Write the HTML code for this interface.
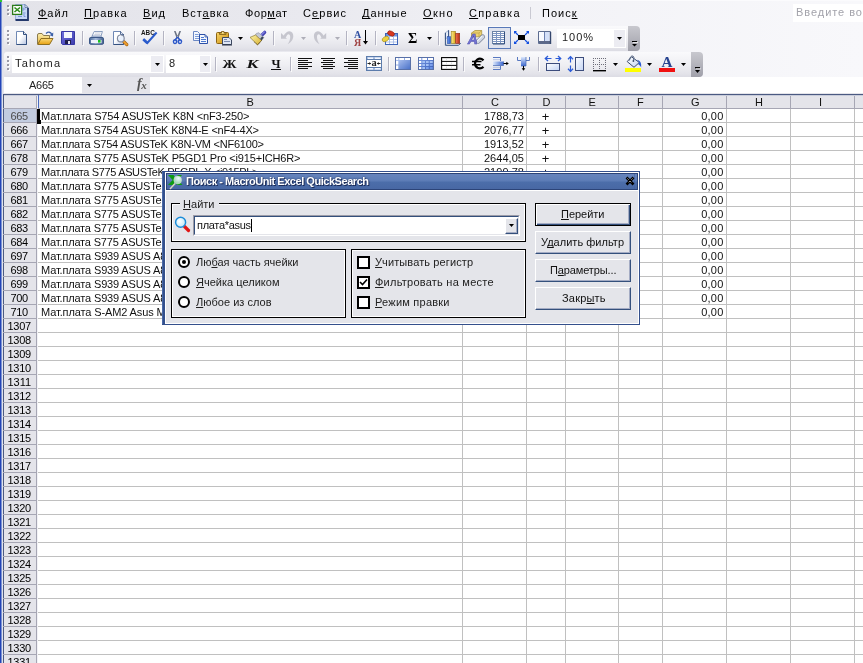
<!DOCTYPE html>
<html><head><meta charset="utf-8"><title>Excel</title>
<style>
*{box-sizing:border-box;margin:0;padding:0}
html,body{width:863px;height:663px;overflow:hidden;background:#fff}
body{font-family:"Liberation Sans",sans-serif;font-size:11px;color:#000;position:relative;will-change:transform}
.a{position:absolute}
.t{position:absolute;white-space:nowrap;line-height:14px;height:14px}
u{text-decoration:underline;text-decoration-skip-ink:none;text-underline-offset:1px;text-decoration-thickness:1px}
svg{position:absolute;overflow:visible}
.grip i{position:absolute;width:2px;height:2px;background:#fff;left:1px}
.grip i:before{content:"";position:absolute;left:-1px;top:-1px;width:2px;height:2px;background:#9a9aa6}
.sep{position:absolute;width:1px;background:#a9a9b8}
.dd{position:absolute;width:5px;height:3px;background:#000;clip-path:polygon(0 0,100% 0,50% 100%)}
</style></head><body>
<!-- window left border -->
<div class="a" style="left:0;top:0;width:1px;height:663px;background:#2444b8"></div>
<div class="a" style="left:1px;top:0;width:1px;height:663px;background:#7c94d4"></div>
<div class="a" style="left:2px;top:0;width:1px;height:663px;background:#e0e2ec"></div>
<div class="a" style="left:0;top:0;width:2px;height:2px;background:#30c830"></div><!-- green -->
<!-- menu bar -->
<div class="a" style="left:3px;top:0;width:860px;height:26px;background:linear-gradient(90deg,#e3e3e9 0%,#e9e9ef 35%,#f3f3f7 65%,#f8f8fb 100%)"></div>
<div class="a" style="left:3px;top:0;width:860px;height:1px;background:#fbfbfd"></div>
<div class="a" style="left:793px;top:4px;width:70px;height:18px;background:#fff"></div>
<div class="sep" style="left:530px;top:7px;height:12px;background:#c9c9d2"></div>
<div class="grip a" style="left:7px;top:0"><i style="top:6px"></i><i style="top:10px"></i><i style="top:14px"></i></div>
<svg style="left:0;top:0" width="60" height="26" viewBox="0 0 60 26">
<path d="M15.500 4.500 H25 L28 7.500 V19.500 H15.500 Z" fill="#c8d8f8" stroke="#8ca4d8" stroke-width="0.800"/>
<path d="M25 4.500 L28 7.500 H25 Z" fill="#f4f8ff" stroke="#34507c" stroke-width="0.600"/>
<path d="M23 7.500 V11 M23 9 H25.500 M23 13 H25.500 M18 16.500 H22 M24 14 V16.500 H25.500" stroke="#7c98d8" stroke-width="1" fill="none"/>
<path d="M28 8 V20 H15.500" fill="none" stroke="#24386c" stroke-width="1.800"/>
<rect x="12.600" y="5.400" width="9" height="9" fill="#fff" stroke="#2c7c1c" stroke-width="1.300"/>
<path d="M14.500 7.500 L20 12 M20 7.500 L14.500 12" stroke="#2c8c1c" stroke-width="1.600"/>
</svg>

<!-- toolbar rows background -->
<div class="a" style="left:3px;top:26px;width:860px;height:51px;background:linear-gradient(90deg,#e3e3e9 0%,#e9e9ef 35%,#f3f3f7 65%,#f8f8fb 100%)"></div>
<!-- standard toolbar -->
<div class="a" style="left:4px;top:26px;width:636px;height:25px;border-radius:3px 4px 4px 3px;background:linear-gradient(180deg,#fafafc 0%,#efeff3 50%,#e4e4ea 85%,#dcdce4 100%)"></div>
<div class="a" style="left:628px;top:26px;width:12px;height:25px;border-radius:0 4px 4px 0;background:linear-gradient(180deg,#c8c8ce 0%,#b4b4bc 50%,#a0a0aa 100%)"></div>
<div class="grip a" style="left:7px;top:26px"><i style="top:5px"></i><i style="top:9px"></i><i style="top:13px"></i><i style="top:17px"></i></div>
<svg style="left:0;top:0" width="863" height="80" viewBox="0 0 863 80">
<defs>
<linearGradient id="gPage" x1="0" y1="0" x2="1" y2="1"><stop offset="0" stop-color="#fff"/><stop offset="0.45" stop-color="#fff"/><stop offset="1" stop-color="#b4c2e0"/></linearGradient>
<linearGradient id="gFold" x1="0" y1="0" x2="0" y2="1"><stop offset="0" stop-color="#fbeeb0"/><stop offset="1" stop-color="#e9b63a"/></linearGradient>
<linearGradient id="gFold2" x1="0" y1="0" x2="0" y2="1"><stop offset="0" stop-color="#f9d978"/><stop offset="1" stop-color="#e8a010"/></linearGradient>
<linearGradient id="gSave" x1="0" y1="0" x2="1" y2="1"><stop offset="0" stop-color="#7070e0"/><stop offset="1" stop-color="#3c3cac"/></linearGradient>
<linearGradient id="gPrn" x1="0" y1="0" x2="0" y2="1"><stop offset="0" stop-color="#9fb4d4"/><stop offset="1" stop-color="#4c6a98"/></linearGradient>
<linearGradient id="gBlue" x1="0" y1="0" x2="1" y2="1"><stop offset="0" stop-color="#a8c0f0"/><stop offset="1" stop-color="#3a5cb0"/></linearGradient>
<linearGradient id="gClip" x1="0" y1="0" x2="1" y2="1"><stop offset="0" stop-color="#f8d468"/><stop offset="1" stop-color="#cc9010"/></linearGradient>
<linearGradient id="gPrn2" x1="0" y1="0" x2="1" y2="0"><stop offset="0" stop-color="#4c6c9c"/><stop offset="0.45" stop-color="#a8bcdc"/><stop offset="1" stop-color="#44608c"/></linearGradient>
<linearGradient id="gBristle" x1="0" y1="0" x2="1" y2="1"><stop offset="0" stop-color="#fcf4a8"/><stop offset="1" stop-color="#d8b030"/></linearGradient>
<linearGradient id="gBarB" x1="0" y1="0" x2="1" y2="0"><stop offset="0" stop-color="#6c9cf0"/><stop offset="1" stop-color="#2c58c0"/></linearGradient>
<linearGradient id="gBarY" x1="0" y1="0" x2="1" y2="0"><stop offset="0" stop-color="#fcec90"/><stop offset="1" stop-color="#d8a818"/></linearGradient>
<linearGradient id="gBarR" x1="0" y1="0" x2="1" y2="0"><stop offset="0" stop-color="#f07050"/><stop offset="1" stop-color="#b42c14"/></linearGradient>
</defs>
<!-- separators -->
<g fill="#b4b4c2">
<rect x="82" y="31" width="1" height="14"/><rect x="134" y="31" width="1" height="14"/><rect x="163" y="31" width="1" height="14"/>
<rect x="273" y="31" width="1" height="14"/><rect x="346" y="31" width="1" height="14"/><rect x="375" y="31" width="1" height="14"/><rect x="438" y="31" width="1" height="14"/>
</g>
<g fill="#fff" opacity="0.8">
<rect x="83" y="32" width="1" height="14"/><rect x="135" y="32" width="1" height="14"/><rect x="164" y="32" width="1" height="14"/>
<rect x="274" y="32" width="1" height="14"/><rect x="347" y="32" width="1" height="14"/><rect x="376" y="32" width="1" height="14"/><rect x="439" y="32" width="1" height="14"/>
</g>
<!-- new -->
<path d="M16.5 31.5 H23.5 L26.5 34.5 V44.5 H16.5 Z" fill="url(#gPage)" stroke="#6f88b4" stroke-width="1"/>
<path d="M23.5 31.5 L26.5 34.5 V44.5 H16.5" fill="none" stroke="#34507f" stroke-width="1"/>
<path d="M23.5 31.5 V34.5 H26.5" fill="#dfe6f5" stroke="#34507f" stroke-width="1"/>
<!-- open -->
<path d="M37.5 44 V35 Q37.5 33.5 39 33.5 H42 L43.5 35.5 H49.5 V38.5" fill="url(#gFold)" stroke="#8a7a4c" stroke-width="1"/>
<path d="M37.7 44.5 L41 38.5 H53 L49.5 44.5 Z" fill="url(#gFold2)" stroke="#8f6f20" stroke-width="1"/>
<path d="M46 33.5 Q49.5 30.5 52 34.5" fill="none" stroke="#3a5fa8" stroke-width="1.3"/>
<path d="M53.3 32.5 L53 36.5 L49.7 35.3 Z" fill="#3a5fa8"/>
<!-- save -->
<path d="M61.5 31.5 H74.5 V44.5 H62.5 L61.5 43.5 Z" fill="url(#gSave)" stroke="#3838a4" stroke-width="1"/>
<rect x="64" y="32" width="8" height="6" fill="#f4f6fc"/>
<rect x="65" y="40" width="6" height="4" fill="#20204c"/>
<rect x="68" y="41" width="2" height="3" fill="#e8e8f4"/>
<!-- print -->
<path d="M92 36.200 L94.200 31.500 H102.400 L101 36.200 Z" fill="#fff" stroke="#7088b0" stroke-width="0.800"/>
<path d="M95 33 H100.800 M94.300 34.600 H100.300" stroke="#b4bcd0" stroke-width="0.700"/>
<path d="M90.500 38 L92 36.200 H101 L103 38 Z" fill="#d4dcec" stroke="#6c84ac" stroke-width="0.600"/>
<rect x="89.500" y="37.500" width="14" height="6.800" rx="1.200" fill="url(#gPrn2)" stroke="#3c5888" stroke-width="1"/>
<rect x="91" y="40" width="10.500" height="3" fill="#eef2fa"/>
<rect x="98" y="40" width="2.600" height="2.600" fill="#18c020"/>
<!-- preview -->
<path d="M113.500 31.500 H120.500 L123.500 34.500 V44.500 H113.500 Z" fill="url(#gPage)" stroke="#6f88b4" stroke-width="1"/>
<path d="M120.500 31.500 L123.500 34.500 V44.500 H113.500" fill="none" stroke="#34507f" stroke-width="1"/>
<path d="M120.500 31.500 V34.500 H123.500" fill="#dfe6f5" stroke="#34507f" stroke-width="0.800"/>
<path d="M123.800 41.600 L126.800 44.600" stroke="#a86410" stroke-width="3.200" stroke-linecap="round"/>
<path d="M123.800 41.600 L126.800 44.600" stroke="#f0a030" stroke-width="1.800" stroke-linecap="round"/>
<circle cx="120.800" cy="38.400" r="3.400" fill="#e8f0fc" stroke="#848ca0" stroke-width="1.200"/>
<path d="M118.800 37.500 Q119.500 36 121 35.800" stroke="#fff" stroke-width="0.900" fill="none"/>
<!-- spell -->
<text x="141" y="34.600" font-family="Liberation Sans" font-weight="bold" font-size="6.500" fill="#181818" textLength="13.800" lengthAdjust="spacingAndGlyphs">ABC</text>
<path d="M143.300 39.300 L147.300 43 L156.600 32.500" fill="none" stroke="#2c5ccc" stroke-width="2"/>
<path d="M143.300 39.300 L147.300 43" fill="none" stroke="#2c5ccc" stroke-width="2.600"/>
<!-- cut -->
<path d="M174 31 L175.600 31 L178.300 37.800 L176.700 38.600 Z M181 31 L179.400 31 L176.700 37.800 L178.300 38.600 Z" fill="#6c7484"/>
<path d="M177.500 37 L175 40 M177.500 37 L180 40" stroke="#2c54c0" stroke-width="1.400"/>
<ellipse cx="175.100" cy="41.600" rx="2.300" ry="2.600" fill="#2c58c8"/>
<ellipse cx="179.900" cy="41.600" rx="2.300" ry="2.600" fill="#2c58c8"/>
<ellipse cx="175" cy="41.800" rx="0.900" ry="1.100" fill="#dfe6f8"/>
<ellipse cx="180" cy="41.800" rx="0.900" ry="1.100" fill="#dfe6f8"/>
<!-- copy -->
<path d="M193.500 31.500 H197.500 L199.500 33.500 V40.500 H193.500 Z" fill="#f4f7fd" stroke="#6c88c4" stroke-width="1"/>
<path d="M195 34.500 H198.500 M195 36.500 H199 M195 38.500 H199" stroke="#7c9cd8" stroke-width="1"/>
<path d="M199.500 34.500 H205 L207.500 37 V43.500 H199.500 Z" fill="#f4f7fd" stroke="#2c50a8" stroke-width="1"/>
<path d="M205 34.500 V37 H207.500" fill="none" stroke="#2c50a8" stroke-width="0.800"/>
<path d="M201 37.500 H204 M201 39.500 H206 M201 41.500 H206" stroke="#4c78d0" stroke-width="1"/>
<!-- paste -->
<rect x="216.500" y="32.500" width="12" height="11" rx="1" fill="url(#gClip)" stroke="#8c6414" stroke-width="1"/>
<path d="M219.500 34.500 V33 H221.500 V31.500 H224 V33 H226 V34.500 Z" fill="#e8c048" stroke="#7c5c18" stroke-width="0.800"/>
<rect x="222.200" y="32.200" width="1.200" height="1.200" fill="#fff8d8"/>
<path d="M222.500 37.500 H229 L231.500 40 V44.500 H222.500 Z" fill="#dfe6f4" stroke="#3c4860" stroke-width="1"/>
<path d="M222 45 H232" stroke="#2c3448" stroke-width="1"/>
<path d="M224 39.500 H227 M224 41.500 H230" stroke="#7c8cb0" stroke-width="1"/>
<path d="M238 37 H243 L240.500 40 Z" fill="#000"/>
<!-- format painter -->
<path d="M261.500 35.500 L264.700 32.300" stroke="#4444b4" stroke-width="3.200" stroke-linecap="round"/>
<path d="M261.300 34.800 L264.300 32" stroke="#8080e0" stroke-width="1.200" stroke-linecap="round"/>
<path d="M256.500 33.300 L259 32.800 L263.800 37.600 L261.500 40.500 L255.500 35 Z" fill="#c4c8d4" stroke="#8c90a4" stroke-width="0.600"/>
<path d="M262 36.500 L263.800 37.600 L261.500 40.500 L260 39 Z" fill="#3c4858"/>
<path d="M250 37.400 L255.500 35 L261.500 40.500 L257.600 44.900 Z" fill="url(#gBristle)" stroke="#8c7830" stroke-width="0.700"/>
<path d="M261.500 40.500 L257.600 44.900 L254 41.800" fill="none" stroke="#4c3c10" stroke-width="0.900" stroke-dasharray="1 0.800"/>
<!-- undo (disabled) -->
<g fill="#c6c6ce">
<path d="M281 33 V38.700 H287 Z"/>
<path d="M283.300 36.200 C285 33 287.500 31.300 289.500 31.300 C292 31.300 293.300 33.500 293.300 36 C293.300 39.500 291 42.600 287.600 44.200 C289.700 41.600 290.200 39 290.200 37 C290.200 35.200 289.500 34.300 288.500 34.300 C287.500 34.300 286.500 35.600 285.900 37.700 Z"/>
<path d="M326.200 33 V38.700 H320.200 Z"/>
<path d="M323.900 36.200 C322.200 33 319.700 31.300 317.700 31.300 C315.200 31.300 313.900 33.500 313.900 36 C313.900 39.500 316.200 42.600 319.600 44.200 C317.500 41.600 317 39 317 37 C317 35.200 317.700 34.300 318.700 34.300 C319.700 34.300 320.700 35.600 321.300 37.700 Z"/>
</g>
<path d="M301 37 H306 L303.500 40 Z" fill="#aeaeb8"/>
<path d="M335 37 H340 L337.500 40 Z" fill="#aeaeb8"/>
<!-- sort -->
<text x="354" y="37.600" font-family="Liberation Serif" font-weight="bold" font-size="10" fill="#2c4ca0" textLength="7.200" lengthAdjust="spacingAndGlyphs">A</text>
<text x="354" y="45.700" font-family="Liberation Serif" font-weight="bold" font-size="10.500" fill="#a04444" textLength="7.200" lengthAdjust="spacingAndGlyphs">Я</text>
<path d="M365.500 30 V43" stroke="#000" stroke-width="1"/>
<path d="M363 41 H368 L365.500 44.500 Z" fill="#000"/>
<!-- hyperlink/table icon -->
<rect x="385.500" y="33.500" width="12" height="11" fill="#fff" stroke="#3c64b8" stroke-width="1"/>
<rect x="386" y="34" width="11" height="2.500" fill="#6c94e0"/>
<path d="M386 39.500 H397 M386 42 H397 M389.500 36 V44 M393.500 36 V44" stroke="#9cb4e4" stroke-width="0.800"/>
<ellipse cx="391" cy="33.500" rx="3.600" ry="2.300" transform="rotate(25 391 33.500)" fill="#d83820" stroke="#982010" stroke-width="0.600"/>
<ellipse cx="385.500" cy="39" rx="3.600" ry="2.300" transform="rotate(-30 385.500 39)" fill="#ecd040" stroke="#a08818" stroke-width="0.600"/>
<!-- sigma -->
<text x="408" y="42.600" font-family="Liberation Serif" font-weight="bold" font-size="14.600" fill="#000" textLength="9.300" lengthAdjust="spacingAndGlyphs">Σ</text>
<path d="M427 37 H432 L429.500 40 Z" fill="#000"/>
<!-- chart -->
<path d="M445.400 32.800 L448.600 30.400 V36.500 L445.400 39 Z" fill="#e4ecf8" stroke="#6c84ac" stroke-width="0.600"/>
<path d="M448.600 30.300 V37" stroke="#34507f" stroke-width="1"/>
<path d="M445.400 32.800 V45.300 H458.500 L460.800 43" fill="none" stroke="#34507f" stroke-width="1"/>
<path d="M445.400 45.300 L447.500 43.500 H460.500" fill="none" stroke="#8ca0c4" stroke-width="0.600"/>
<rect x="447.200" y="36.700" width="3.400" height="6.800" fill="url(#gBarB)" stroke="#2448a0" stroke-width="0.500"/>
<rect x="451.200" y="31.300" width="4.300" height="12.200" fill="url(#gBarY)" stroke="#98801c" stroke-width="0.600"/>
<rect x="455.700" y="33.300" width="4" height="10.200" fill="url(#gBarR)" stroke="#8c2c14" stroke-width="0.600"/>
<!-- drawing -->
<path d="M471.500 33 L475 30.500 H481.700 V34.500 L479 36.800 H471.500 Z" fill="#ecd070" stroke="#a48c34" stroke-width="0.700"/>
<path d="M471.500 33 H479 V36.800 M479 33 L481.700 30.500" fill="none" stroke="#b89c40" stroke-width="0.600"/>
<path d="M478 41.500 L482.800 36.800" stroke="#7c8498" stroke-width="4.600" stroke-linecap="round"/>
<path d="M478 41.500 L482.800 36.800" stroke="#d0d6e2" stroke-width="3.200" stroke-linecap="round"/>
<path d="M477.600 40.600 L481.800 36.400" stroke="#f4f6fa" stroke-width="1.100" stroke-linecap="round"/>
<text x="467.700" y="43.500" font-family="Liberation Sans" font-weight="bold" font-style="italic" font-size="14" fill="#7474d4" stroke="#4c4cac" stroke-width="0.500" textLength="10" lengthAdjust="spacingAndGlyphs">A</text>
<!-- selected grid button -->
<rect x="488.500" y="27.500" width="22" height="21" fill="#dfe3ee" stroke="#5878b8" stroke-width="1"/>
<rect x="492.500" y="31.500" width="12" height="12" fill="#fff" stroke="#6c84a8" stroke-width="1"/>
<path d="M493 33.500 H504 M493 35.500 H504 M493 37.500 H504 M493 39.500 H504 M493 41.500 H504 M496.500 32 V43 M500.500 32 V43" stroke="#7c94c0" stroke-width="1"/>
<path d="M504.500 32 V44 H493" stroke="#34507f" stroke-width="1" fill="none"/>
<!-- fullscreen -->
<rect x="518" y="35" width="7" height="5" fill="#000"/>
<path d="M514.500 31.500 L518 35 M528.500 31.500 L525 35 M514.500 43.500 L518 40 M528.500 43.500 L525 40" stroke="#1450e0" stroke-width="1.200"/>
<path d="M514 31 H517 L514 34 Z M529 31 H526 L529 34 Z M514 44 H517 L514 41 Z M529 44 H526 L529 41 Z" fill="#1450e0"/>
<!-- panes -->
<path d="M538.500 31.500 H550.500 V43.500 H538.500 Z" fill="#e6ecfa" stroke="#5c6c90" stroke-width="1"/>
<rect x="539" y="32" width="5" height="9" fill="#f8faff"/><rect x="545" y="32" width="4" height="9" fill="#d4e0f8"/>
<path d="M544.500 32 V41" stroke="#6c80b0" stroke-width="1"/>
<rect x="539" y="41" width="11" height="2.500" fill="#5c6888"/>
<path d="M550.500 32 V44" stroke="#34466c" stroke-width="1.400"/>
<!-- zoom box -->
<rect x="557" y="29" width="69" height="19" fill="#fff"/>
<rect x="614" y="30" width="11" height="17" fill="#ececf2"/>
<path d="M617 37 H622 L619.500 40 Z" fill="#000"/>
<!-- end cap glyph -->
<rect x="632" y="41" width="5" height="1" fill="#000"/><path d="M632 44 H637 L634.500 46.500 Z" fill="#000"/>
<rect x="633" y="42" width="5" height="1" fill="#fff" opacity="0.7"/>
</svg>

<!-- formatting toolbar -->
<div class="a" style="left:4px;top:52px;width:699px;height:25px;border-radius:3px 4px 4px 3px;background:linear-gradient(180deg,#fafafc 0%,#efeff3 50%,#e4e4ea 85%,#dcdce4 100%)"></div>
<div class="a" style="left:691px;top:52px;width:12px;height:25px;border-radius:0 4px 4px 0;background:linear-gradient(180deg,#c8c8ce 0%,#b4b4bc 50%,#a0a0aa 100%)"></div>
<div class="grip a" style="left:7px;top:52px"><i style="top:5px"></i><i style="top:9px"></i><i style="top:13px"></i><i style="top:17px"></i></div>
<svg style="left:0;top:0" width="863" height="80" viewBox="0 0 863 80">
<defs>
<linearGradient id="gTbl" x1="0" y1="0" x2="1" y2="1"><stop offset="0" stop-color="#c0d2f8"/><stop offset="1" stop-color="#4870c8"/></linearGradient>
<linearGradient id="gBar" x1="0" y1="0" x2="1" y2="0"><stop offset="0" stop-color="#dce8fc"/><stop offset="1" stop-color="#3c68d0"/></linearGradient>
<linearGradient id="gBarV" x1="0" y1="0" x2="0" y2="1"><stop offset="0" stop-color="#dce8fc"/><stop offset="1" stop-color="#3c68d0"/></linearGradient>
<linearGradient id="gBox" x1="0" y1="0" x2="1" y2="1"><stop offset="0" stop-color="#fff"/><stop offset="1" stop-color="#c4d4f4"/></linearGradient>
<linearGradient id="gTbl2" x1="0" y1="0" x2="1" y2="1"><stop offset="0" stop-color="#7c9ce4"/><stop offset="1" stop-color="#3c60bc"/></linearGradient>
</defs>
<!-- font name box -->
<rect x="12" y="55" width="152" height="18" fill="#fff"/>
<rect x="151" y="56" width="12" height="16" fill="#ececf2"/>
<path d="M155 63 H160 L157.500 66 Z" fill="#000"/>
<!-- size box -->
<rect x="166" y="55" width="45" height="18" fill="#fff"/>
<rect x="200" y="56" width="10" height="16" fill="#ececf2"/>
<path d="M203 63 H208 L205.500 66 Z" fill="#000"/>
<!-- separators -->
<g fill="#b4b4c2">
<rect x="215" y="57" width="1" height="14"/><rect x="290" y="57" width="1" height="14"/><rect x="388" y="57" width="1" height="14"/>
<rect x="463" y="57" width="1" height="14"/><rect x="538" y="57" width="1" height="14"/>
</g>
<g fill="#fff" opacity="0.800">
<rect x="216" y="58" width="1" height="14"/><rect x="291" y="58" width="1" height="14"/><rect x="389" y="58" width="1" height="14"/>
<rect x="464" y="58" width="1" height="14"/><rect x="539" y="58" width="1" height="14"/>
</g>
<!-- B I U -->
<text x="222.500" y="68" font-family="Liberation Serif" font-weight="bold" font-size="13" fill="#111" textLength="14" lengthAdjust="spacingAndGlyphs">Ж</text>
<text x="246.500" y="68" font-family="Liberation Serif" font-weight="bold" font-style="italic" font-size="13" fill="#111" textLength="12" lengthAdjust="spacingAndGlyphs">К</text>
<text x="271.500" y="68" font-family="Liberation Serif" font-weight="bold" font-size="13" fill="#111" textLength="9" lengthAdjust="spacingAndGlyphs">Ч</text>
<rect x="271" y="69" width="10" height="1" fill="#111"/>
<!-- align -->
<g fill="#111" shape-rendering="crispEdges">
<rect x="298" y="58" width="14" height="1"/><rect x="298" y="60" width="10" height="1"/><rect x="298" y="62" width="14" height="1"/><rect x="298" y="64" width="10" height="1"/><rect x="298" y="66" width="14" height="1"/><rect x="298" y="68" width="10" height="1"/>
<rect x="321" y="58" width="14" height="1"/><rect x="323" y="60" width="10" height="1"/><rect x="321" y="62" width="14" height="1"/><rect x="323" y="64" width="10" height="1"/><rect x="321" y="66" width="14" height="1"/><rect x="323" y="68" width="10" height="1"/>
<rect x="344" y="58" width="14" height="1"/><rect x="348" y="60" width="10" height="1"/><rect x="344" y="62" width="14" height="1"/><rect x="348" y="64" width="10" height="1"/><rect x="344" y="66" width="14" height="1"/><rect x="348" y="68" width="10" height="1"/>
</g>
<!-- merge & center -->
<rect x="366.500" y="56.500" width="15" height="14" fill="#a8bce0" stroke="#5c7cac" stroke-width="1"/>
<g fill="#f4f8ff"><rect x="368" y="57.500" width="5" height="1.500"/><rect x="375" y="57.500" width="5.500" height="1.500"/><rect x="368" y="68" width="5" height="1.500"/><rect x="375" y="68" width="5.500" height="1.500"/></g>
<rect x="367" y="60" width="14" height="7" fill="#fff"/>
<path d="M367 59.500 H381 M367 67.500 H381" stroke="#5c7cac" stroke-width="1"/>
<text x="371.400" y="66.300" font-family="Liberation Serif" font-weight="bold" font-size="10.500" fill="#222" textLength="5.200" lengthAdjust="spacingAndGlyphs">a</text>
<path d="M367.500 63.500 H370.800 M377.200 63.500 H380.500" stroke="#222" stroke-width="1"/>
<path d="M369.300 62 L370.900 63.500 L369.300 65 Z M378.700 62 L377.100 63.500 L378.700 65 Z" fill="#222"/>
<!-- table icon 1 -->
<rect x="395.500" y="57.500" width="15" height="12" fill="url(#gTbl)" stroke="#5870a8" stroke-width="1"/>
<g fill="#fff"><rect x="396" y="58" width="2.300" height="2"/><rect x="399.300" y="58" width="4.700" height="2"/><rect x="405" y="58" width="5" height="2"/><rect x="396" y="61" width="2.300" height="3.500"/><rect x="396" y="65.500" width="2.300" height="3.500"/></g>
<!-- table icon 2 -->
<rect x="418.500" y="57.500" width="15" height="12" fill="#4468c0" stroke="#5870a8" stroke-width="1"/>
<rect x="419" y="58" width="14" height="11" fill="url(#gTbl2)"/>
<g fill="#fff"><rect x="419" y="58" width="2.300" height="2"/><rect x="422.300" y="58" width="4.700" height="2"/><rect x="428" y="58" width="5" height="2"/><rect x="419" y="61" width="2.300" height="2"/><rect x="419" y="64" width="2.300" height="2"/><rect x="419" y="67" width="2.300" height="2"/></g>
<g fill="#a4c0f4"><rect x="422.300" y="61" width="2.700" height="2"/><rect x="426" y="61" width="2.700" height="2"/><rect x="429.700" y="61" width="3" height="2"/><rect x="422.300" y="64" width="2.700" height="2"/><rect x="426" y="64" width="2.700" height="2"/><rect x="429.700" y="64" width="3" height="2" fill="#7ca0ec"/><rect x="422.300" y="67" width="2.700" height="2"/><rect x="426" y="67" width="2.700" height="2" fill="#7ca0ec"/><rect x="429.700" y="67" width="3" height="2" fill="#6890e4"/></g>
<!-- table icon 3 -->
<rect x="441.600" y="57.600" width="15.200" height="11.800" fill="#fff" stroke="#000" stroke-width="1.100"/>
<path d="M442 61.400 H456.500 M442 65.400 H456.500" stroke="#000" stroke-width="1"/>
<path d="M446.500 58.500 V69 M451.500 58.500 V69" stroke="#d8d8e0" stroke-width="0.800" stroke-dasharray="1.500 2.500"/>
<!-- euro -->
<path d="M483.500 60.300 Q480.500 57.600 477.500 59.400 Q475 61 475 63.500 Q475 66.200 477.500 67.700 Q480.500 69.300 483.500 66.800" fill="none" stroke="#000" stroke-width="2.300"/>
<path d="M472 61.600 H481.500 M472 64.800 H480.500" stroke="#000" stroke-width="1.500"/>
<!-- merge right -->
<path d="M493 57.500 H500.500 V61 M493 69.500 H500.500 V66" fill="none" stroke="#5878c0" stroke-width="1"/>
<path d="M493 59.700 H500 M493 67.300 H500" stroke="#a4b8e0" stroke-width="0.800"/>
<rect x="493" y="61.500" width="10.500" height="4" fill="url(#gBar)"/>
<path d="M493 65.500 H503.500 V61.500" fill="none" stroke="#4464b0" stroke-width="0.700"/>
<path d="M503.500 63.500 H508" stroke="#000" stroke-width="1"/><path d="M506.300 61.800 L508.800 63.500 L506.300 65.200 Z" fill="#000"/>
<!-- merge down -->
<path d="M517.500 57 V60.500 H521 M529.500 57 V60.500 H526" fill="none" stroke="#5878c0" stroke-width="1"/>
<rect x="521" y="57" width="5" height="9" fill="url(#gBarV)"/>
<path d="M521 66 H526 V57" fill="none" stroke="#4464b0" stroke-width="0.700"/>
<path d="M523.500 66 V70" stroke="#000" stroke-width="1"/><path d="M521.700 68.300 L523.500 70.800 L525.300 68.300 Z" fill="#000"/>
<!-- col width -->
<rect x="546.500" y="63.500" width="13" height="7" fill="url(#gBox)" stroke="#3c4c7c" stroke-width="1"/>
<path d="M545.500 58.500 H551.500 M555.500 58.500 H560.500" stroke="#2c5cd8" stroke-width="1.200"/>
<path d="M548 56 L545.300 58.500 L548 61 M558 56 L560.700 58.500 L558 61" fill="none" stroke="#2c5cd8" stroke-width="1.300"/>
<!-- row height -->
<rect x="575.500" y="57.500" width="8" height="13" fill="url(#gBox)" stroke="#3c4c7c" stroke-width="1"/>
<path d="M570.500 56.800 V62.500 M570.500 65.500 V71.200" stroke="#2c5cd8" stroke-width="1.200"/>
<path d="M568 59.300 L570.500 56.600 L573 59.300 M568 68.700 L570.500 71.400 L573 68.700" fill="none" stroke="#2c5cd8" stroke-width="1.300"/>
<!-- borders -->
<g fill="#6c6c78" shape-rendering="crispEdges">
<rect x="593" y="58" width="1" height="1"/><rect x="593" y="60" width="1" height="1"/><rect x="593" y="62" width="1" height="1"/><rect x="593" y="64" width="1" height="1"/><rect x="593" y="66" width="1" height="1"/><rect x="593" y="68" width="1" height="1"/><rect x="595" y="58" width="1" height="1"/><rect x="595" y="64" width="1" height="1"/><rect x="597" y="58" width="1" height="1"/><rect x="597" y="64" width="1" height="1"/><rect x="599" y="58" width="1" height="1"/><rect x="599" y="60" width="1" height="1"/><rect x="599" y="62" width="1" height="1"/><rect x="599" y="64" width="1" height="1"/><rect x="599" y="66" width="1" height="1"/><rect x="599" y="68" width="1" height="1"/><rect x="601" y="58" width="1" height="1"/><rect x="601" y="64" width="1" height="1"/><rect x="603" y="58" width="1" height="1"/><rect x="603" y="64" width="1" height="1"/><rect x="605" y="58" width="1" height="1"/><rect x="605" y="60" width="1" height="1"/><rect x="605" y="62" width="1" height="1"/><rect x="605" y="64" width="1" height="1"/><rect x="605" y="66" width="1" height="1"/><rect x="605" y="68" width="1" height="1"/>
</g>
<rect x="593" y="70" width="13" height="1.400" fill="#000"/>
<path d="M613 63 H618 L615.500 66 Z" fill="#000"/>
<!-- fill color -->
<path d="M631.500 56.800 L639.300 62.500 L634 67.300 L627.200 61.600 Z" fill="url(#gBox)" stroke="#3c4c6c" stroke-width="1"/>
<path d="M629.500 60.500 Q630 55.500 633 56 Q634.500 56.500 633.500 61" fill="none" stroke="#4c5c7c" stroke-width="0.900"/>
<circle cx="633.400" cy="61" r="0.900" fill="#3c4c6c"/>
<path d="M636.800 59.800 Q641.800 60.500 641.200 67.200 Q639.500 64.800 638 64 L639.300 62.500 Z" fill="#2c5cd0"/>
<rect x="625" y="68" width="16" height="4" fill="#ffff00"/>
<path d="M647 63 H652 L649.500 66 Z" fill="#000"/>
<!-- font color -->
<text x="661.500" y="66.500" font-family="Liberation Serif" font-weight="bold" font-size="14" fill="#284490" textLength="11" lengthAdjust="spacingAndGlyphs">A</text>
<rect x="659" y="68" width="16" height="4" fill="#f01010"/>
<path d="M681 63 H686 L683.500 66 Z" fill="#000"/>
<!-- end cap glyph -->
<rect x="695" y="67" width="5" height="1.300" fill="#000"/><path d="M695 70 H700 L697.500 73 Z" fill="#000"/>
<rect x="696" y="68.300" width="5" height="1" fill="#fff" opacity="0.700"/>
</svg>

<!-- formula bar -->
<div class="a" style="left:3px;top:77px;width:860px;height:17px;background:#e4e4ea"></div>
<div class="a" style="left:4px;top:77px;width:78px;height:16px;background:#fff"></div>
<div class="dd" style="left:87px;top:84px"></div>
<div class="a" style="left:150px;top:77px;width:713px;height:16px;background:#fff"></div>
<div class="t" style="left:137px;top:77px;font-family:'Liberation Serif',serif;font-style:italic;font-weight:bold;font-size:14px;color:#555">f<span style="font-size:11px;position:relative;top:1px;left:-0.5px">x</span></div>
<!-- grid header -->
<div class="a" style="left:3px;top:94px;width:860px;height:15px;background:#e4e4ea"></div>
<div class="a" style="left:3px;top:94px;width:860px;height:1px;background:#4b5a82"></div>
<div class="a" style="left:3px;top:95px;width:860px;height:1px;background:#c8ccda"></div>
<div class="a" style="left:3px;top:108px;width:860px;height:1px;background:#a6a6b4"></div>
<!-- row header column -->
<div class="a" style="left:3px;top:109px;width:34px;height:554px;background:#e4e4ea"></div>
<div class="a" style="left:3px;top:94px;width:1px;height:569px;background:#4b5a82"></div>
<div class="a" style="left:36px;top:96px;width:1px;height:567px;background:#a6a6b4"></div>
<div class="a" style="left:37px;top:96px;width:1px;height:567px;background:#f2f2f6"></div>
<!-- selected row header -->
<div class="a" style="left:4px;top:108px;width:32px;height:15px;background:#c2cce0;border-top:1px solid #7c98cc;border-bottom:1px solid #7c98cc"></div>
<!-- column header separators -->
<div class="a" style="left:462px;top:96px;width:1px;height:12px;background:#a6a6b4"></div>
<div class="a" style="left:526px;top:96px;width:1px;height:12px;background:#a6a6b4"></div>
<div class="a" style="left:565px;top:96px;width:1px;height:12px;background:#a6a6b4"></div>
<div class="a" style="left:618px;top:96px;width:1px;height:12px;background:#a6a6b4"></div>
<div class="a" style="left:662px;top:96px;width:1px;height:12px;background:#a6a6b4"></div>
<div class="a" style="left:726px;top:96px;width:1px;height:12px;background:#a6a6b4"></div>
<div class="a" style="left:790px;top:96px;width:1px;height:12px;background:#a6a6b4"></div>
<div class="a" style="left:854px;top:96px;width:1px;height:12px;background:#a6a6b4"></div>
<div class="a" style="left:462px;top:109px;width:1px;height:554px;background:#c0c0c0"></div>
<div class="a" style="left:526px;top:109px;width:1px;height:554px;background:#c0c0c0"></div>
<div class="a" style="left:565px;top:109px;width:1px;height:554px;background:#c0c0c0"></div>
<div class="a" style="left:618px;top:109px;width:1px;height:554px;background:#c0c0c0"></div>
<div class="a" style="left:662px;top:109px;width:1px;height:554px;background:#c0c0c0"></div>
<div class="a" style="left:726px;top:109px;width:1px;height:554px;background:#c0c0c0"></div>
<div class="a" style="left:790px;top:109px;width:1px;height:554px;background:#c0c0c0"></div>
<div class="a" style="left:854px;top:109px;width:1px;height:554px;background:#c0c0c0"></div>
<div class="a" style="left:38px;top:122px;width:825px;height:1px;background:#c0c0c0"></div>
<div class="a" style="left:38px;top:136px;width:825px;height:1px;background:#c0c0c0"></div>
<div class="a" style="left:38px;top:150px;width:825px;height:1px;background:#c0c0c0"></div>
<div class="a" style="left:38px;top:164px;width:825px;height:1px;background:#c0c0c0"></div>
<div class="a" style="left:38px;top:178px;width:825px;height:1px;background:#c0c0c0"></div>
<div class="a" style="left:38px;top:192px;width:825px;height:1px;background:#c0c0c0"></div>
<div class="a" style="left:38px;top:206px;width:825px;height:1px;background:#c0c0c0"></div>
<div class="a" style="left:38px;top:220px;width:825px;height:1px;background:#c0c0c0"></div>
<div class="a" style="left:38px;top:234px;width:825px;height:1px;background:#c0c0c0"></div>
<div class="a" style="left:38px;top:248px;width:825px;height:1px;background:#c0c0c0"></div>
<div class="a" style="left:38px;top:262px;width:825px;height:1px;background:#c0c0c0"></div>
<div class="a" style="left:38px;top:276px;width:825px;height:1px;background:#c0c0c0"></div>
<div class="a" style="left:38px;top:290px;width:825px;height:1px;background:#c0c0c0"></div>
<div class="a" style="left:38px;top:304px;width:825px;height:1px;background:#c0c0c0"></div>
<div class="a" style="left:38px;top:318px;width:825px;height:1px;background:#c0c0c0"></div>
<div class="a" style="left:38px;top:332px;width:825px;height:1px;background:#c0c0c0"></div>
<div class="a" style="left:38px;top:346px;width:825px;height:1px;background:#c0c0c0"></div>
<div class="a" style="left:38px;top:360px;width:825px;height:1px;background:#c0c0c0"></div>
<div class="a" style="left:38px;top:374px;width:825px;height:1px;background:#c0c0c0"></div>
<div class="a" style="left:38px;top:388px;width:825px;height:1px;background:#c0c0c0"></div>
<div class="a" style="left:38px;top:402px;width:825px;height:1px;background:#c0c0c0"></div>
<div class="a" style="left:38px;top:416px;width:825px;height:1px;background:#c0c0c0"></div>
<div class="a" style="left:38px;top:430px;width:825px;height:1px;background:#c0c0c0"></div>
<div class="a" style="left:38px;top:444px;width:825px;height:1px;background:#c0c0c0"></div>
<div class="a" style="left:38px;top:458px;width:825px;height:1px;background:#c0c0c0"></div>
<div class="a" style="left:38px;top:472px;width:825px;height:1px;background:#c0c0c0"></div>
<div class="a" style="left:38px;top:486px;width:825px;height:1px;background:#c0c0c0"></div>
<div class="a" style="left:38px;top:500px;width:825px;height:1px;background:#c0c0c0"></div>
<div class="a" style="left:38px;top:514px;width:825px;height:1px;background:#c0c0c0"></div>
<div class="a" style="left:38px;top:528px;width:825px;height:1px;background:#c0c0c0"></div>
<div class="a" style="left:38px;top:542px;width:825px;height:1px;background:#c0c0c0"></div>
<div class="a" style="left:38px;top:556px;width:825px;height:1px;background:#c0c0c0"></div>
<div class="a" style="left:38px;top:570px;width:825px;height:1px;background:#c0c0c0"></div>
<div class="a" style="left:38px;top:584px;width:825px;height:1px;background:#c0c0c0"></div>
<div class="a" style="left:38px;top:598px;width:825px;height:1px;background:#c0c0c0"></div>
<div class="a" style="left:38px;top:612px;width:825px;height:1px;background:#c0c0c0"></div>
<div class="a" style="left:38px;top:626px;width:825px;height:1px;background:#c0c0c0"></div>
<div class="a" style="left:38px;top:640px;width:825px;height:1px;background:#c0c0c0"></div>
<div class="a" style="left:38px;top:654px;width:825px;height:1px;background:#c0c0c0"></div>
<div class="a" style="left:38px;top:668px;width:825px;height:1px;background:#c0c0c0"></div>
<div class="a" style="left:3px;top:108px;width:33px;height:1px;background:#a6a6b4"></div>
<div class="a" style="left:3px;top:122px;width:33px;height:1px;background:#a6a6b4"></div>
<div class="a" style="left:3px;top:136px;width:33px;height:1px;background:#a6a6b4"></div>
<div class="a" style="left:3px;top:150px;width:33px;height:1px;background:#a6a6b4"></div>
<div class="a" style="left:3px;top:164px;width:33px;height:1px;background:#a6a6b4"></div>
<div class="a" style="left:3px;top:178px;width:33px;height:1px;background:#a6a6b4"></div>
<div class="a" style="left:3px;top:192px;width:33px;height:1px;background:#a6a6b4"></div>
<div class="a" style="left:3px;top:206px;width:33px;height:1px;background:#a6a6b4"></div>
<div class="a" style="left:3px;top:220px;width:33px;height:1px;background:#a6a6b4"></div>
<div class="a" style="left:3px;top:234px;width:33px;height:1px;background:#a6a6b4"></div>
<div class="a" style="left:3px;top:248px;width:33px;height:1px;background:#a6a6b4"></div>
<div class="a" style="left:3px;top:262px;width:33px;height:1px;background:#a6a6b4"></div>
<div class="a" style="left:3px;top:276px;width:33px;height:1px;background:#a6a6b4"></div>
<div class="a" style="left:3px;top:290px;width:33px;height:1px;background:#a6a6b4"></div>
<div class="a" style="left:3px;top:304px;width:33px;height:1px;background:#a6a6b4"></div>
<div class="a" style="left:3px;top:318px;width:33px;height:1px;background:#a6a6b4"></div>
<div class="a" style="left:3px;top:332px;width:33px;height:1px;background:#a6a6b4"></div>
<div class="a" style="left:3px;top:346px;width:33px;height:1px;background:#a6a6b4"></div>
<div class="a" style="left:3px;top:360px;width:33px;height:1px;background:#a6a6b4"></div>
<div class="a" style="left:3px;top:374px;width:33px;height:1px;background:#a6a6b4"></div>
<div class="a" style="left:3px;top:388px;width:33px;height:1px;background:#a6a6b4"></div>
<div class="a" style="left:3px;top:402px;width:33px;height:1px;background:#a6a6b4"></div>
<div class="a" style="left:3px;top:416px;width:33px;height:1px;background:#a6a6b4"></div>
<div class="a" style="left:3px;top:430px;width:33px;height:1px;background:#a6a6b4"></div>
<div class="a" style="left:3px;top:444px;width:33px;height:1px;background:#a6a6b4"></div>
<div class="a" style="left:3px;top:458px;width:33px;height:1px;background:#a6a6b4"></div>
<div class="a" style="left:3px;top:472px;width:33px;height:1px;background:#a6a6b4"></div>
<div class="a" style="left:3px;top:486px;width:33px;height:1px;background:#a6a6b4"></div>
<div class="a" style="left:3px;top:500px;width:33px;height:1px;background:#a6a6b4"></div>
<div class="a" style="left:3px;top:514px;width:33px;height:1px;background:#a6a6b4"></div>
<div class="a" style="left:3px;top:528px;width:33px;height:1px;background:#a6a6b4"></div>
<div class="a" style="left:3px;top:542px;width:33px;height:1px;background:#a6a6b4"></div>
<div class="a" style="left:3px;top:556px;width:33px;height:1px;background:#a6a6b4"></div>
<div class="a" style="left:3px;top:570px;width:33px;height:1px;background:#a6a6b4"></div>
<div class="a" style="left:3px;top:584px;width:33px;height:1px;background:#a6a6b4"></div>
<div class="a" style="left:3px;top:598px;width:33px;height:1px;background:#a6a6b4"></div>
<div class="a" style="left:3px;top:612px;width:33px;height:1px;background:#a6a6b4"></div>
<div class="a" style="left:3px;top:626px;width:33px;height:1px;background:#a6a6b4"></div>
<div class="a" style="left:3px;top:640px;width:33px;height:1px;background:#a6a6b4"></div>
<div class="a" style="left:3px;top:654px;width:33px;height:1px;background:#a6a6b4"></div>
<div class="a" style="left:3px;top:668px;width:33px;height:1px;background:#a6a6b4"></div>
<!-- hidden col A cursor -->
<div class="a" style="left:38px;top:95px;width:1px;height:13px;background:#4a6cc0"></div>
<div class="a" style="left:37px;top:109px;width:3px;height:11px;background:#000"></div>
<div class="a" style="left:37px;top:120px;width:4px;height:4px;background:#000"></div>
<div class="t" style="top:6px;left:38px;color:#000;letter-spacing:0.984px;"><u>Ф</u>айл</div>
<div class="t" style="top:6px;left:84px;color:#000;letter-spacing:1.066px;"><u>П</u>равка</div>
<div class="t" style="top:6px;left:143px;color:#000;letter-spacing:1.047px;"><u>В</u>ид</div>
<div class="t" style="top:6px;left:182px;color:#000;letter-spacing:0.935px;">Вст<u>а</u>вка</div>
<div class="t" style="top:6px;left:245px;color:#000;letter-spacing:0.584px;">Фор<u>м</u>ат</div>
<div class="t" style="top:6px;left:303px;color:#000;letter-spacing:1.066px;">С<u>е</u>рвис</div>
<div class="t" style="top:6px;left:362px;color:#000;letter-spacing:0.950px;"><u>Д</u>анные</div>
<div class="t" style="top:6px;left:423px;color:#000;letter-spacing:1.312px;"><u>О</u>кно</div>
<div class="t" style="top:6px;left:469px;color:#000;letter-spacing:1.224px;"><u>С</u>правка</div>
<div class="t" style="top:6px;left:542px;color:#000;letter-spacing:1.004px;">Поис<u>к</u></div>
<div class="t" style="top:5px;left:796px;color:#a3a3ab;letter-spacing:0.952px;">Введите вопрос</div>
<div class="t" style="top:30px;left:562px;color:#222;letter-spacing:0.953px;">100%</div>
<div class="t" style="top:56px;left:15px;color:#222;letter-spacing:1.172px;">Tahoma</div>
<div class="t" style="top:56px;left:169px;color:#222;">8</div>
<div class="t" style="top:78px;left:29px;color:#222;letter-spacing:-0.234px;">A665</div>
<div class="t" style="top:109px;left:10.55px;color:#4c4c4c;letter-spacing:-0.430px;">665</div>
<div class="t" style="top:123px;left:10.55px;color:#000;letter-spacing:-0.430px;">666</div>
<div class="t" style="top:137px;left:10.55px;color:#000;letter-spacing:-0.430px;">667</div>
<div class="t" style="top:151px;left:10.55px;color:#000;letter-spacing:-0.430px;">678</div>
<div class="t" style="top:165px;left:10.55px;color:#000;letter-spacing:-0.430px;">679</div>
<div class="t" style="top:179px;left:10.55px;color:#000;letter-spacing:-0.430px;">680</div>
<div class="t" style="top:193px;left:10.55px;color:#000;letter-spacing:-0.430px;">681</div>
<div class="t" style="top:207px;left:10.55px;color:#000;letter-spacing:-0.430px;">682</div>
<div class="t" style="top:221px;left:10.55px;color:#000;letter-spacing:-0.430px;">683</div>
<div class="t" style="top:235px;left:10.55px;color:#000;letter-spacing:-0.430px;">684</div>
<div class="t" style="top:249px;left:10.55px;color:#000;letter-spacing:-0.430px;">697</div>
<div class="t" style="top:263px;left:10.55px;color:#000;letter-spacing:-0.430px;">698</div>
<div class="t" style="top:277px;left:10.55px;color:#000;letter-spacing:-0.430px;">699</div>
<div class="t" style="top:291px;left:10.55px;color:#000;letter-spacing:-0.430px;">700</div>
<div class="t" style="top:305px;left:10.55px;color:#000;letter-spacing:-0.430px;">710</div>
<div class="t" style="top:319px;left:7.550000000000001px;color:#000;letter-spacing:-0.328px;">1307</div>
<div class="t" style="top:333px;left:7.550000000000001px;color:#000;letter-spacing:-0.328px;">1308</div>
<div class="t" style="top:347px;left:7.550000000000001px;color:#000;letter-spacing:-0.328px;">1309</div>
<div class="t" style="top:361px;left:7.550000000000001px;color:#000;letter-spacing:-0.328px;">1310</div>
<div class="t" style="top:375px;left:7.550000000000001px;color:#000;letter-spacing:-0.052px;">1311</div>
<div class="t" style="top:389px;left:7.550000000000001px;color:#000;letter-spacing:-0.328px;">1312</div>
<div class="t" style="top:403px;left:7.550000000000001px;color:#000;letter-spacing:-0.328px;">1313</div>
<div class="t" style="top:417px;left:7.550000000000001px;color:#000;letter-spacing:-0.328px;">1314</div>
<div class="t" style="top:431px;left:7.550000000000001px;color:#000;letter-spacing:-0.328px;">1315</div>
<div class="t" style="top:445px;left:7.550000000000001px;color:#000;letter-spacing:-0.328px;">1316</div>
<div class="t" style="top:459px;left:7.550000000000001px;color:#000;letter-spacing:-0.328px;">1317</div>
<div class="t" style="top:473px;left:7.550000000000001px;color:#000;letter-spacing:-0.328px;">1318</div>
<div class="t" style="top:487px;left:7.550000000000001px;color:#000;letter-spacing:-0.328px;">1319</div>
<div class="t" style="top:501px;left:7.550000000000001px;color:#000;letter-spacing:-0.328px;">1320</div>
<div class="t" style="top:515px;left:7.550000000000001px;color:#000;letter-spacing:-0.328px;">1321</div>
<div class="t" style="top:529px;left:7.550000000000001px;color:#000;letter-spacing:-0.328px;">1322</div>
<div class="t" style="top:543px;left:7.550000000000001px;color:#000;letter-spacing:-0.328px;">1323</div>
<div class="t" style="top:557px;left:7.550000000000001px;color:#000;letter-spacing:-0.328px;">1324</div>
<div class="t" style="top:571px;left:7.550000000000001px;color:#000;letter-spacing:-0.328px;">1325</div>
<div class="t" style="top:585px;left:7.550000000000001px;color:#000;letter-spacing:-0.328px;">1326</div>
<div class="t" style="top:599px;left:7.550000000000001px;color:#000;letter-spacing:-0.328px;">1327</div>
<div class="t" style="top:613px;left:7.550000000000001px;color:#000;letter-spacing:-0.328px;">1328</div>
<div class="t" style="top:627px;left:7.550000000000001px;color:#000;letter-spacing:-0.328px;">1329</div>
<div class="t" style="top:641px;left:7.550000000000001px;color:#000;letter-spacing:-0.328px;">1330</div>
<div class="t" style="top:655px;left:7.550000000000001px;color:#000;letter-spacing:-0.328px;">1331</div>
<div class="t" style="top:109px;left:41px;color:#111;letter-spacing:-0.122px;">Мат.плата S754 ASUSTeK K8N &lt;nF3-250&gt;</div>
<div class="t" style="top:109px;right:339px;color:#111;letter-spacing:0.039px;">1788,73</div>
<div class="t" style="top:109.5px;left:541.8px;font-size:13px;color:#111;">+</div>
<div class="t" style="top:109px;right:139.5px;color:#111;letter-spacing:0.193px;">0,00</div>
<div class="t" style="top:123px;left:41px;color:#111;letter-spacing:-0.189px;">Мат.плата S754 ASUSTeK K8N4-E &lt;nF4-4X&gt;</div>
<div class="t" style="top:123px;right:339px;color:#111;letter-spacing:0.039px;">2076,77</div>
<div class="t" style="top:123.5px;left:541.8px;font-size:13px;color:#111;">+</div>
<div class="t" style="top:123px;right:139.5px;color:#111;letter-spacing:0.193px;">0,00</div>
<div class="t" style="top:137px;left:41px;color:#111;letter-spacing:-0.219px;">Мат.плата S754 ASUSTeK K8N-VM &lt;NF6100&gt;</div>
<div class="t" style="top:137px;right:339px;color:#111;letter-spacing:0.039px;">1913,52</div>
<div class="t" style="top:137.5px;left:541.8px;font-size:13px;color:#111;">+</div>
<div class="t" style="top:137px;right:139.5px;color:#111;letter-spacing:0.193px;">0,00</div>
<div class="t" style="top:151px;left:41px;color:#111;letter-spacing:-0.167px;">Мат.плата S775 ASUSTeK P5GD1 Pro &lt;i915+ICH6R&gt;</div>
<div class="t" style="top:151px;right:339px;color:#111;letter-spacing:0.039px;">2644,05</div>
<div class="t" style="top:151.5px;left:541.8px;font-size:13px;color:#111;">+</div>
<div class="t" style="top:151px;right:139.5px;color:#111;letter-spacing:0.193px;">0,00</div>
<div class="t" style="top:165px;left:41px;color:#111;letter-spacing:-0.358px;">Мат.плата S775 ASUSTeK P5GPL-X &lt;i915PL&gt;</div>
<div class="t" style="top:165px;right:339px;color:#111;letter-spacing:0.039px;">2199,78</div>
<div class="t" style="top:165.5px;left:541.8px;font-size:13px;color:#111;">+</div>
<div class="t" style="top:165px;right:139.5px;color:#111;letter-spacing:0.193px;">0,00</div>
<div class="t" style="top:179px;left:41px;color:#111;letter-spacing:-0.170px;">Мат.плата S775 ASUSTeK P5GD2</div>
<div class="t" style="top:179.5px;left:541.8px;font-size:13px;color:#111;">+</div>
<div class="t" style="top:179px;right:139.5px;color:#111;letter-spacing:0.193px;">0,00</div>
<div class="t" style="top:193px;left:41px;color:#111;letter-spacing:-0.170px;">Мат.плата S775 ASUSTeK P5LD2</div>
<div class="t" style="top:193.5px;left:541.8px;font-size:13px;color:#111;">+</div>
<div class="t" style="top:193px;right:139.5px;color:#111;letter-spacing:0.193px;">0,00</div>
<div class="t" style="top:207px;left:41px;color:#111;letter-spacing:-0.170px;">Мат.плата S775 ASUSTeK P5LD2</div>
<div class="t" style="top:207.5px;left:541.8px;font-size:13px;color:#111;">+</div>
<div class="t" style="top:207px;right:139.5px;color:#111;letter-spacing:0.193px;">0,00</div>
<div class="t" style="top:221px;left:41px;color:#111;letter-spacing:-0.170px;">Мат.плата S775 ASUSTeK P5WD2</div>
<div class="t" style="top:221.5px;left:541.8px;font-size:13px;color:#111;">+</div>
<div class="t" style="top:221px;right:139.5px;color:#111;letter-spacing:0.193px;">0,00</div>
<div class="t" style="top:235px;left:41px;color:#111;letter-spacing:-0.170px;">Мат.плата S775 ASUSTeK P5ND2</div>
<div class="t" style="top:235.5px;left:541.8px;font-size:13px;color:#111;">+</div>
<div class="t" style="top:235px;right:139.5px;color:#111;letter-spacing:0.193px;">0,00</div>
<div class="t" style="top:249px;left:41px;color:#111;letter-spacing:-0.143px;">Мат.плата S939 ASUS A8N-E</div>
<div class="t" style="top:249.5px;left:541.8px;font-size:13px;color:#111;">+</div>
<div class="t" style="top:249px;right:139.5px;color:#111;letter-spacing:0.193px;">0,00</div>
<div class="t" style="top:263px;left:41px;color:#111;letter-spacing:-0.143px;">Мат.плата S939 ASUS A8N-SLI</div>
<div class="t" style="top:263.5px;left:541.8px;font-size:13px;color:#111;">+</div>
<div class="t" style="top:263px;right:139.5px;color:#111;letter-spacing:0.193px;">0,00</div>
<div class="t" style="top:277px;left:41px;color:#111;letter-spacing:-0.143px;">Мат.плата S939 ASUS A8N32</div>
<div class="t" style="top:277.5px;left:541.8px;font-size:13px;color:#111;">+</div>
<div class="t" style="top:277px;right:139.5px;color:#111;letter-spacing:0.193px;">0,00</div>
<div class="t" style="top:291px;left:41px;color:#111;letter-spacing:-0.143px;">Мат.плата S939 ASUS A8R-MVP</div>
<div class="t" style="top:291.5px;left:541.8px;font-size:13px;color:#111;">+</div>
<div class="t" style="top:291px;right:139.5px;color:#111;letter-spacing:0.193px;">0,00</div>
<div class="t" style="top:305px;left:41px;color:#111;letter-spacing:-0.116px;">Мат.плата S-AM2 Asus M2N-E</div>
<div class="t" style="top:305.5px;left:541.8px;font-size:13px;color:#111;">+</div>
<div class="t" style="top:305px;right:139.5px;color:#111;letter-spacing:0.193px;">0,00</div>
<div class="t" style="top:95px;left:246.5px;color:#111;">B</div>
<div class="t" style="top:95px;left:491.0px;color:#111;">C</div>
<div class="t" style="top:95px;left:542.5px;color:#111;">D</div>
<div class="t" style="top:95px;left:588.5px;color:#111;">E</div>
<div class="t" style="top:95px;left:637.0px;color:#111;">F</div>
<div class="t" style="top:95px;left:691.0px;color:#111;">G</div>
<div class="t" style="top:95px;left:755.0px;color:#111;">H</div>
<div class="t" style="top:95px;left:819.0px;color:#111;">I</div>
<!-- dialog -->
<div class="a" style="left:162px;top:171px;width:478px;height:154px;background:#34508c"></div>
<div class="a" style="left:162px;top:172px;width:1px;height:152px;background:#4a6aa8"></div>
<div class="a" style="left:165px;top:172px;width:474px;height:152px;background:#fff"></div>
<div class="a" style="left:166px;top:173px;width:472px;height:150px;background:#e4e5ea"></div>
<div class="a" style="left:166px;top:190px;width:472px;height:1px;background:#fff"></div>
<div class="a" style="left:166px;top:173px;width:472px;height:17px;background:linear-gradient(180deg,#6684bc 0%,#5c7cb6 48%,#4c6eaa 52%,#4868a4 100%);border:1px solid #2c4478"></div>
<div class="a" style="left:634px;top:174px;width:1px;height:15px;background:#4260a0;opacity:.6"></div>
<svg style="left:0;top:0" width="863" height="330" viewBox="0 0 863 330">
<defs>
<radialGradient id="gLens" cx="0.4" cy="0.4" r="0.7"><stop offset="0" stop-color="#fff"/><stop offset="1" stop-color="#b8e4f8"/></radialGradient>
<radialGradient id="gLens2" cx="0.6" cy="0.3" r="0.8"><stop offset="0" stop-color="#eef8ff"/><stop offset="1" stop-color="#8cd0a0"/></radialGradient>
</defs>
<!-- title icon -->
<path d="M168 175 H173.500 L175.500 178 L177.500 175 H182 L177.800 180 L182.500 185 H177 L175.200 182 L173 185 H168 L172.700 180 Z" fill="#0c9c10"/>
<path d="M175 183.500 L170 189" stroke="#d8d4c0" stroke-width="1.500"/>
<circle cx="177.700" cy="180" r="3.900" fill="url(#gLens2)" stroke="#c8dcc8" stroke-width="0.600"/>
<!-- close -->
<path d="M626.500 177.500 L633.500 184.500 M633.500 177.500 L626.500 184.500" stroke="#000" stroke-width="2.600"/>
<path d="M627.500 178.500 L632.500 183.500 M632.500 178.500 L627.500 183.500" stroke="#fff" stroke-width="0.700" stroke-dasharray="1.600 2.200"/>
<!-- magnifier -->
<path d="M184.500 226.500 L188.500 230.500" stroke="#e01414" stroke-width="3.200" stroke-linecap="round"/>
<circle cx="180.600" cy="222.300" r="5" fill="url(#gLens)" stroke="#1c8cd8" stroke-width="1.500"/>
</svg>

<!-- group Найти -->
<div class="a" style="left:171px;top:203px;width:355px;height:39px;border:1px solid #000;box-shadow:inset 1px 1px 0 #fff,inset -1px -1px 0 #fff"></div>
<div class="a" style="left:180px;top:203px;width:39px;height:2px;background:#e4e5ea"></div>
<div class="a" style="left:193px;top:215px;width:327px;height:21px;background:#fff;border:1px solid #9c9ca8;border-right-color:#fff;border-bottom-color:#fff"></div>
<div class="a" style="left:194px;top:216px;width:325px;height:19px;border:1px solid #34507c;border-right-color:#e4e5ea;border-bottom-color:#e4e5ea"></div>
<div class="a" style="left:505px;top:218px;width:13px;height:16px;background:#e4e5ea;border:1px solid #fff;border-right-color:#34507c;border-bottom-color:#34507c;box-shadow:inset -1px -1px 0 #a4acc4"></div>
<div class="dd" style="left:509px;top:224px"></div>
<div class="a" style="left:251px;top:219px;width:1px;height:13px;background:#000"></div>
<!-- group radios -->
<div class="a" style="left:171px;top:249px;width:175px;height:69px;border:1px solid #000;box-shadow:inset 1px 1px 0 #fff,inset -1px -1px 0 #fff"></div>
<div class="a" style="left:178px;top:256px;width:12px;height:12px;border:2px solid #000;border-radius:50%;background:#fff"></div>
<div class="a" style="left:182px;top:260px;width:4px;height:4px;border-radius:50%;background:#000"></div>
<div class="a" style="left:178px;top:276px;width:12px;height:12px;border:2px solid #000;border-radius:50%;background:#fff"></div>
<div class="a" style="left:178px;top:296px;width:12px;height:12px;border:2px solid #000;border-radius:50%;background:#fff"></div>
<!-- group checks -->
<div class="a" style="left:351px;top:249px;width:175px;height:69px;border:1px solid #000;box-shadow:inset 1px 1px 0 #fff,inset -1px -1px 0 #fff"></div>
<div class="a" style="left:357px;top:256px;width:13px;height:13px;border:2px solid #000;background:#fff"></div>
<div class="a" style="left:357px;top:276px;width:13px;height:13px;border:2px solid #000;background:#fff"></div>
<svg style="left:359px;top:278px" width="9" height="9" viewBox="0 0 9 9"><path d="M1 4 L3.500 6.500 L8 1.500" fill="none" stroke="#000" stroke-width="1.600"/></svg>
<div class="a" style="left:357px;top:296px;width:13px;height:13px;border:2px solid #000;background:#fff"></div>
<!-- buttons -->
<div class="a" style="left:535px;top:203px;width:96px;height:23px;background:#e4e5ea;border:1px solid #000;box-shadow:inset 1px 1px 0 #fff,inset -1px -1px 0 #34507c,inset -2px -2px 0 #a4acc4"></div>
<div class="a" style="left:535px;top:231px;width:96px;height:23px;background:#e4e5ea;border:1px solid #fff;border-right-color:#34507c;border-bottom-color:#34507c;box-shadow:inset -1px -1px 0 #a4acc4"></div>
<div class="a" style="left:535px;top:259px;width:96px;height:23px;background:#e4e5ea;border:1px solid #fff;border-right-color:#34507c;border-bottom-color:#34507c;box-shadow:inset -1px -1px 0 #a4acc4"></div>
<div class="a" style="left:535px;top:287px;width:96px;height:23px;background:#e4e5ea;border:1px solid #fff;border-right-color:#34507c;border-bottom-color:#34507c;box-shadow:inset -1px -1px 0 #a4acc4"></div>

<div class="t" style="top:174px;left:186px;color:#fff;font-weight:bold;letter-spacing:-0.461px;text-shadow:1px 1px 0 #1c2c58,0 0 2px #1c2c58;">Поиск - MacroUnit Excel QuickSearch</div>
<div class="t" style="top:197px;left:183px;color:#222;letter-spacing:0.027px;"><u>Н</u>айти</div>
<div class="t" style="top:218px;left:197px;color:#111;letter-spacing:-0.312px;">плата*asus</div>
<div class="t" style="top:255px;left:196px;color:#222;letter-spacing:-0.014px;">Лю<u>б</u>ая часть ячейки</div>
<div class="t" style="top:275px;left:196px;color:#222;letter-spacing:0.017px;"><u>Я</u>чейка целиком</div>
<div class="t" style="top:295px;left:196px;color:#222;letter-spacing:0.016px;"><u>Л</u>юбое из слов</div>
<div class="t" style="top:255px;left:375px;color:#222;letter-spacing:0.107px;"><u>У</u>читывать регистр</div>
<div class="t" style="top:275px;left:375px;color:#222;letter-spacing:0.239px;"><u>Ф</u>ильтровать на месте</div>
<div class="t" style="top:295px;left:375px;color:#222;letter-spacing:0.230px;"><u>Р</u>ежим правки</div>
<div class="t" style="top:207px;left:561px;color:#111;letter-spacing:-0.016px;"><u>П</u>ерейти</div>
<div class="t" style="top:235px;left:541px;color:#111;letter-spacing:0.023px;">У<u>д</u>алить фильтр</div>
<div class="t" style="top:263px;left:550px;color:#111;letter-spacing:-0.119px;">П<u>а</u>раметры...</div>
<div class="t" style="top:291px;left:562px;color:#111;letter-spacing:0.188px;">Закр<u>ы</u>ть</div>

</body></html>
